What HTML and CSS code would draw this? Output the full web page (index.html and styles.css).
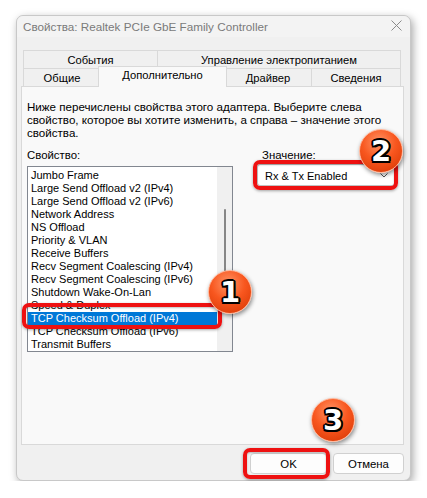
FILE: index.html
```html
<!DOCTYPE html>
<html lang="ru">
<head>
    <meta charset="UTF-8">
    <title>Свойства: Realtek PCIe GbE Family Controller</title>
    <link rel="stylesheet" href="styles.css">
</head>
<body>

<div class="window">
    <div class="titlebar">
        <span class="title">Свойства: Realtek PCIe GbE Family Controller</span>
        <svg class="close" width="11" height="11" viewBox="0 0 11 11">
            <path d="M0.5 0.5 L10.5 10.5 M10.5 0.5 L0.5 10.5" stroke="#8a8a8a" stroke-width="1" fill="none"/>
        </svg>
    </div>

    <div class="tabs">
        <div class="tab-row">
            <div class="tab tab-events">События</div>
            <div class="tab tab-power last">Управление электропитанием</div>
        </div>
        <div class="tab-row">
            <div class="tab tab-general">Общие</div>
            <div class="tab tab-advanced active">Дополнительно</div>
            <div class="tab tab-driver">Драйвер</div>
            <div class="tab tab-info last">Сведения</div>
        </div>
    </div>

    <div class="panel">
        <p class="intro">Ниже перечислены свойства этого адаптера. Выберите слева<br>свойство, которое вы хотите изменить, а справа – значение этого<br>свойства.</p>

        <div class="fields">
            <div class="field field-prop">
                <div class="label">Свойство:</div>
                <div class="listbox">
                    <ul class="items">
                        <li>Jumbo Frame</li>
                        <li>Large Send Offload v2 (IPv4)</li>
                        <li>Large Send Offload v2 (IPv6)</li>
                        <li>Network Address</li>
                        <li>NS Offload</li>
                        <li>Priority &amp; VLAN</li>
                        <li>Receive Buffers</li>
                        <li>Recv Segment Coalescing (IPv4)</li>
                        <li>Recv Segment Coalescing (IPv6)</li>
                        <li>Shutdown Wake-On-Lan</li>
                        <li>Speed &amp; Duplex</li>
                        <li class="selected">TCP Checksum Offload (IPv4)</li>
                        <li>TCP Checksum Offload (IPv6)</li>
                        <li>Transmit Buffers</li>
                    </ul>
                    <div class="scrollbar"><div class="thumb"></div></div>
                </div>
            </div>

            <div class="field field-value">
                <div class="label label-value">Значение:</div>
                <div class="combo">
                    <span>Rx &amp; Tx Enabled</span>
                    <svg width="8" height="5" viewBox="0 0 8 5">
                        <path d="M0.5 0.5 L4 4 L7.5 0.5" stroke="#555" stroke-width="1" fill="none"/>
                    </svg>
                </div>
            </div>
        </div>
    </div>

    <div class="buttons">
        <button class="btn btn-ok">OK</button>
        <button class="btn btn-cancel">Отмена</button>
    </div>
</div>

<!-- выделения и номера шагов поверх окна -->
<div class="mark mark-list"></div>
<div class="mark mark-combo"></div>
<div class="mark mark-ok"></div>

<div class="badge badge-1">1</div>
<div class="badge badge-2">2</div>
<div class="badge badge-3">3</div>

</body>
</html>
```

FILE: styles.css
```css
/* Страница */
body {
    margin: 0;
    position: relative;
    background-color: #ffffff;
    font-family: "Liberation Sans", Arial, sans-serif;
    font-size: 11px;
    color: #000;
}

/* Окно диалога */
.window {
    margin: 15px 0 0 16px;
    width: 393px;
    height: 464px;
    background-color: #f0f0f0;
    border: 1px solid #c8c8c8;
    border-radius: 7px;
    box-shadow: 2px 3px 8px rgba(0, 0, 0, 0.35);
}

.titlebar {
    height: 21px;
    padding: 0 8px 0 6px;
    display: flex;
    align-items: center;
    justify-content: space-between;
    background-color: #f3f3f3;
    border-radius: 7px 7px 0 0;
}

.title {
    font-size: 11.7px;
    color: #7a7a7a;
}

.close {
    margin-top: -2px;
}

/* Вкладки */
.tabs {
    margin: 13px 0 0 6px;
    width: 378px;
    font-size: 11.2px;
}

.tab-row {
    display: flex;
    height: 18px;
}

.tab {
    box-sizing: border-box;
    height: 18px;
    border-top: 1px solid #d9d9d9;
    border-left: 1px solid #d9d9d9;
    text-align: center;
    line-height: 18px;
    background-color: #f0f0f0;
}

.tab.last {
    border-right: 1px solid #d9d9d9;
}

.tab-events { width: 134px; }
.tab-power { width: 244px; }
.tab-general { width: 77px; }
.tab-driver { width: 86px; }
.tab-info { width: 90px; }

.tab.active {
    position: relative;
    z-index: 1;
    width: 129px;
    height: 21px;
    margin: -2px -2px 0 -2px;
    border-right: 1px solid #d9d9d9;
    background-color: #f9f9f9;
    line-height: 17px;
}

.tab-driver {
    border-left: none;
}

/* Панель вкладки */
.panel {
    box-sizing: border-box;
    margin-left: 4px;
    width: 383px;
    height: 359px;
    padding: 13px 8px 0 5px;
    border: 1px solid #d9d9d9;
    background-color: #f9f9f9;
}

.intro {
    margin: 0;
    font-size: 11.6px;
    line-height: 13px;
    white-space: nowrap;
}

.fields {
    display: flex;
    gap: 24px;
    margin-top: 10px;
}

.label {
    line-height: 13px;
    font-size: 11.4px;
}

.label-value {
    padding-left: 5px;
}

/* Список свойств */
.listbox {
    box-sizing: border-box;
    display: flex;
    margin-top: 4px;
    width: 206px;
    height: 186px;
    border: 1px solid #828790;
    background-color: #fff;
}

.items {
    flex: 1;
    list-style: none;
    margin: 0;
    padding: 2px 0 0 0;
}

.items li {
    padding-left: 3px;
    line-height: 13px;
    white-space: nowrap;
}

.items li.selected {
    background-color: #0078d7;
    color: #fff;
}

.scrollbar {
    width: 15px;
    background-color: #f0f0f0;
    display: flex;
    justify-content: center;
}

.thumb {
    width: 2px;
    height: 92px;
    margin-top: 42px;
    background-color: #868686;
    border-radius: 1px;
}

/* Выпадающий список */
.combo {
    box-sizing: border-box;
    display: flex;
    align-items: center;
    justify-content: space-between;
    margin-top: 2px;
    width: 138px;
    height: 22px;
    padding: 1px 6px 0 7px;
    border: 1px solid #c4c4c4;
    border-radius: 3px;
    background-color: #fff;
}

/* Кнопки */
.buttons {
    display: flex;
    justify-content: flex-end;
    gap: 6px;
    margin: 8px 6px 0 0;
}

.btn {
    box-sizing: border-box;
    height: 21px;
    padding: 0;
    font-family: "Liberation Sans", Arial, sans-serif;
    font-size: 11.4px;
    color: #000;
    background-color: #fdfdfd;
    border: 1px solid #d0d0d0;
    border-radius: 4px;
}

.btn-ok { width: 77px; }
.btn-cancel { width: 71px; }

/* Красные рамки */
.mark {
    position: absolute;
    box-sizing: border-box;
    border: 4px solid #ee1111;
    border-radius: 7px;
    box-shadow: 0 1px 3px rgba(0, 0, 0, 0.35), inset 0 1px 2px rgba(0, 0, 0, 0.25);
}

.mark-list { left: 22px; top: 303px; width: 200px; height: 26px; }
.mark-combo { left: 253px; top: 160px; width: 145px; height: 30px; }
.mark-ok { left: 243px; top: 448px; width: 87px; height: 31px; }

/* Номера шагов */
.badge {
    position: absolute;
    box-sizing: border-box;
    width: 44px;
    height: 44px;
    border-radius: 50%;
    border: 1px solid #ffb598;
    background: radial-gradient(circle at 45% 30%, #ff9466 0%, #f8571f 45%, #d43300 100%);
    box-shadow: 1px 2px 4px rgba(0, 0, 0, 0.45);
    text-align: center;
    line-height: 42px;
    font-family: "DejaVu Sans", sans-serif;
    font-weight: bold;
    font-size: 29px;
    color: #fff;
    text-shadow: -2px 0 0 #000, 2px 0 0 #000, 0 -2px 0 #000, 0 2px 0 #000,
                 -1.5px -1.5px 0 #000, 1.5px -1.5px 0 #000, -1.5px 1.5px 0 #000, 1.5px 1.5px 0 #000;
}

.badge-1 { left: 208px; top: 270px; }
.badge-2 { left: 359px; top: 129px; }
.badge-3 { left: 311px; top: 398px; }
```
